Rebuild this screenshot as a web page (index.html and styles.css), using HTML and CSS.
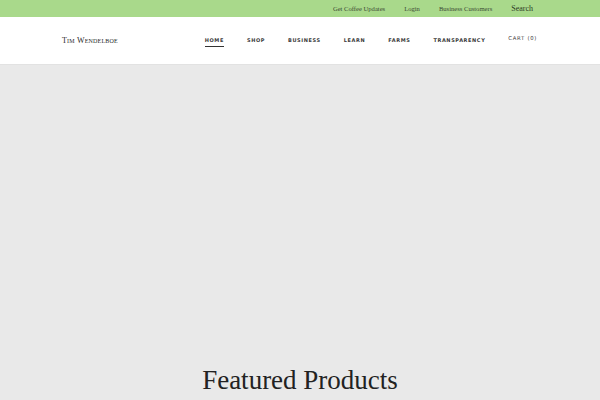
FILE: index.html
```html
<!DOCTYPE html>
<html lang="en">
<head>
    <meta charset="UTF-8">
    <meta name="viewport" content="width=device-width, initial-scale=1.0">
    <title>Tim Wendelboe</title>
    <link rel="stylesheet" href="styles.css">
</head>
<body>
    <div class="topbar">
        <a href="#">Get Coffee Updates</a>
        <a href="#">Login</a>
        <a href="#">Business Customers</a>
        <a href="#" class="search">Search</a>
    </div>

    <header class="header">
        <a href="#" class="logo">Tim Wendelboe</a>
        <nav class="nav">
            <a href="#" class="active">Home</a>
            <a href="#">Shop</a>
            <a href="#">Business</a>
            <a href="#">Learn</a>
            <a href="#">Farms</a>
            <a href="#">Transparency</a>
            <a href="#" class="cart">Cart (0)</a>
        </nav>
    </header>

    <main class="main">
        <div class="hero"></div>
        <h2 class="section-title">Featured Products</h2>
    </main>
</body>
</html>
```

FILE: styles.css
```css
body {
    margin: 0;
    font-family: "Liberation Serif", serif;
    background: #e9e9e9;
    color: #222;
}
a {
    color: inherit;
    text-decoration: none;
}
.topbar {
    height: 17px;
    background-color: #a9d98b;
    display: flex;
    justify-content: flex-end;
    align-items: center;
    gap: 19px;
    padding-right: 67px;
    font-size: 6.6px;
    color: #3c4a33;
}
.topbar .search {
    font-size: 8px;
    color: #2c3a25;
}
.header {
    height: 47px;
    background: #fff;
    border-bottom: 1px solid #e2e2e2;
    display: flex;
    align-items: center;
    padding: 0 63px 0 62px;
}
.logo {
    font-variant: small-caps;
    font-size: 8px;
    letter-spacing: 0.2px;
    color: #2a2a2a;
}
.nav {
    margin-left: auto;
    display: flex;
    align-items: center;
    gap: 23px;
    font-family: "DejaVu Sans", sans-serif;
    font-size: 5px;
    font-weight: bold;
    text-transform: uppercase;
    letter-spacing: 0.6px;
    color: #3a3a3a;
}
.nav a {
    padding: 3px 0;
    border-bottom: 1px solid transparent;
}
.nav a.active {
    border-bottom-color: #333;
}
.nav .cart {
    font-weight: normal;
    font-size: 5.3px;
    letter-spacing: 0.7px;
    margin-left: 0;
    margin-top: -4px;
}
.hero {
    height: 298px;
}
.section-title {
    margin: 0;
    text-align: center;
    font-weight: normal;
    font-size: 27px;
    color: #222;
    line-height: 34px;
}
```
